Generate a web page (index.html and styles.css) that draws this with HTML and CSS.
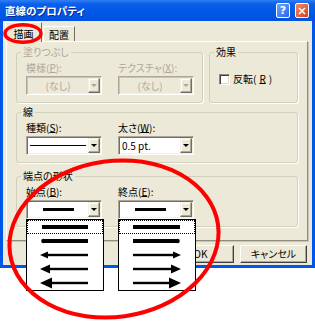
FILE: index.html
```
<!DOCTYPE html>
<html lang="ja">
  <head>
    <meta charset="UTF-8" />
    <title>直線のプロパティ</title>
    <link rel="stylesheet" href="styles.css">
  </head>
  <body>
    <div class="window">
      <div class="titlebar">
        <span class="title">直線のプロパティ</span>
        <div class="caption-btns">
          <span class="cap-btn help">?</span>
          <span class="cap-btn close">
            <svg width="8" height="8" viewBox="0 0 8 8">
              <path d="M1 1L7 7M7 1L1 7" stroke="#fff" stroke-width="1.6" />
            </svg>
          </span>
        </div>
      </div>
      <div class="client">
        <div class="tabs">
          <div class="tab active">描画</div>
          <div class="tab">配置</div>
        </div>
        <div class="panel">
          <div class="row">
            <fieldset class="group fill disabled">
              <legend>塗りつぶし</legend>
              <div class="cols">
                <div class="field">
                  <div class="label">模様(<u>P</u>):</div>
                  <div class="combo">
                    <div class="combo-value center">(なし)</div>
                    <div class="combo-btn"><span class="tri"></span></div>
                  </div>
                </div>
                <div class="field">
                  <div class="label">テクスチャ(<u>X</u>):</div>
                  <div class="combo">
                    <div class="combo-value center">(なし)</div>
                    <div class="combo-btn"><span class="tri"></span></div>
                  </div>
                </div>
              </div>
            </fieldset>
            <fieldset class="group effect">
              <legend>効果</legend>
              <div class="check"><span class="box"></span>反転(<u>R</u>)</div>
            </fieldset>
          </div>

          <fieldset class="group line-group">
            <legend>線</legend>
            <div class="cols">
              <div class="field">
                <div class="label">種類(<u>S</u>):</div>
                <div class="combo">
                  <div class="combo-value"><span class="thin-line"></span></div>
                  <div class="combo-btn"><span class="tri"></span></div>
                </div>
              </div>
              <div class="field">
                <div class="label">太さ(<u>W</u>):</div>
                <div class="combo">
                  <div class="combo-value">0.5 pt.</div>
                  <div class="combo-btn"><span class="tri"></span></div>
                </div>
              </div>
            </div>
          </fieldset>

          <fieldset class="group ends-group">
            <legend>端点の形状</legend>
            <div class="cols">
              <div class="field">
                <div class="label">始点(<u>B</u>):</div>
                <div class="combo">
                  <div class="combo-value center"><span class="thick-line"></span></div>
                  <div class="combo-btn"><span class="tri"></span></div>
                  <div class="dropdown">
                    <div class="item focus">
                      <svg width="76" height="14"><rect x="15" y="5" width="46" height="4" /></svg>
                    </div>
                    <div class="item">
                      <svg width="76" height="14"><rect x="16.5" y="5" width="44.5" height="4" /><circle cx="16.5" cy="7" r="2.3" /></svg>
                    </div>
                    <div class="item">
                      <svg width="76" height="14"><rect x="20" y="5.8" width="41" height="2.4" /><polygon points="13,7 21,3.5 21,10.5" /></svg>
                    </div>
                    <div class="item">
                      <svg width="76" height="14"><rect x="22" y="5.8" width="39" height="2.4" /><polygon points="13,7 23,2.5 23,11.5" /></svg>
                    </div>
                    <div class="item">
                      <svg width="76" height="14"><rect x="24" y="5.8" width="37" height="2.4" /><polygon points="13,7 25,1.5 25,12.5" /></svg>
                    </div>
                  </div>
                </div>
              </div>
              <div class="field">
                <div class="label">終点(<u>E</u>):</div>
                <div class="combo">
                  <div class="combo-value center"><span class="thick-line"></span></div>
                  <div class="combo-btn"><span class="tri"></span></div>
                  <div class="dropdown">
                    <div class="item focus">
                      <svg width="76" height="14"><rect x="14" y="5" width="47" height="4" /></svg>
                    </div>
                    <div class="item">
                      <svg width="76" height="14"><rect x="14" y="5" width="44.5" height="4" /><circle cx="58.5" cy="7" r="2.3" /></svg>
                    </div>
                    <div class="item">
                      <svg width="76" height="14"><rect x="14" y="5.8" width="41" height="2.4" /><polygon points="62,7 54,3.5 54,10.5" /></svg>
                    </div>
                    <div class="item">
                      <svg width="76" height="14"><rect x="14" y="5.8" width="39" height="2.4" /><polygon points="62,7 52,2.5 52,11.5" /></svg>
                    </div>
                    <div class="item">
                      <svg width="76" height="14"><rect x="14" y="5.8" width="37" height="2.4" /><polygon points="62,7 50,1.5 50,12.5" /></svg>
                    </div>
                  </div>
                </div>
              </div>
            </div>
          </fieldset>
        </div>
        <div class="buttons">
          <div class="btn">OK</div>
          <div class="btn">キャンセル</div>
        </div>
      </div>
    </div>

    <svg class="marks" width="315" height="323" viewBox="0 0 315 323">
      <ellipse cx="23" cy="33.5" rx="18" ry="8.8" />
      <ellipse class="big" cx="114" cy="239" rx="105" ry="78" transform="rotate(-8 114 239)" />
    </svg>
  </body>
</html>
```

FILE: styles.css
```
body {
  margin: 0;
  background: #fff;
  font-family: "Noto Sans CJK JP", sans-serif;
  font-size: 10px;
  line-height: 12px;
  color: #000;
  font-feature-settings: "palt";
  position: relative;
  width: 315px;
  height: 323px;
  overflow: hidden;
}
u {
  text-decoration: underline;
  text-underline-offset: 0;
}
.window {
  width: 315px;
}
.titlebar {
  height: 21px;
  box-sizing: border-box;
  padding: 0 6px 0 5px;
  display: flex;
  align-items: center;
  justify-content: space-between;
  background: linear-gradient(#2f7ff2 0, #0a5eea 20%, #0058e6 60%, #0052e0 100%);
}
.title {
  color: #fff;
  font-weight: bold;
  font-size: 10.5px;
  text-shadow: 1px 1px 0 #0a2a90;
}
.caption-btns {
  display: flex;
  gap: 5px;
}
.cap-btn {
  width: 14px;
  height: 15px;
  box-sizing: border-box;
  border: 1px solid #fff;
  border-radius: 2px;
  display: flex;
  align-items: center;
  justify-content: center;
  color: #fff;
  font-family: "DejaVu Sans", sans-serif;
  font-weight: bold;
  font-size: 11px;
}
.help {
  background: linear-gradient(135deg, #6aa6ff, #2a66ea);
}
.close {
  background: linear-gradient(135deg, #f08a68, #d2431b);
}
.client {
  box-sizing: border-box;
  height: 247px;
  padding-top: 1px;
  background: #ece9d8;
  border: 3px solid #0055ea;
  border-top: 0;
}
.tabs {
  display: flex;
  align-items: flex-end;
  height: 19px;
  padding-left: 2px;
}
.tab {
  box-sizing: border-box;
  width: 32px;
  height: 15px;
  margin-left: 1px;
  padding-top: 2px;
  text-align: center;
  background: #ece9d8;
  border: 1px solid;
  border-bottom: 0;
  border-color: #fff #716f64 #716f64 #fff;
}
.tab.active {
  width: 37px;
  height: 20px;
  margin-left: 0;
  margin-bottom: -1px;
  padding-top: 5px;
  position: relative;
  z-index: 1;
}
.panel {
  box-sizing: border-box;
  width: 302px;
  height: 200px;
  margin-left: 3px;
  padding: 4px 9px 0 9px;
  border: 1px solid;
  border-color: #fff #8f8d80 #8f8d80 #fff;
  box-shadow: 1px 1px 0 #c8c5b6;
}
.row {
  display: flex;
  gap: 6px;
}
.group {
  margin: 0;
  min-width: 0;
  padding: 4px 8px 7px 9px;
  border: 1px solid #d0d0bf;
  border-radius: 3px;
  box-shadow: 1px 1px 0 #fff;
}
.group legend {
  padding: 0 2px;
  margin-left: -5px;
  line-height: 12px;
}
.fill {
  width: 187px;
  box-sizing: border-box;
}
.effect {
  flex: 1;
}
.line-group {
  margin-top: 3px;
}
.ends-group {
  margin-top: 7px;
}
.disabled,
.disabled .combo-value {
  color: #aca899;
}
.cols {
  display: flex;
  gap: 16px;
}
.field {
  width: 76px;
}
.label {
  height: 12px;
  margin-bottom: 2px;
  white-space: nowrap;
}
.combo {
  position: relative;
  box-sizing: border-box;
  height: 19px;
  display: flex;
  background: #fff;
  border: 1px solid;
  border-color: #aca899 #fff #fff #aca899;
  box-shadow: inset 1px 1px 0 #716f64, inset -1px -1px 0 #f1efe2;
  padding: 1px;
}
.disabled .combo {
  background: #ece9d8;
  box-shadow: inset 1px 1px 0 #c8c5b6, inset -1px -1px 0 #f1efe2;
}
.combo-value {
  flex: 1;
  display: flex;
  align-items: center;
  padding: 0 2px;
  white-space: nowrap;
}
.combo-value.center {
  justify-content: center;
}
.combo-btn {
  width: 12px;
  box-sizing: border-box;
  background: #ece9d8;
  border: 1px solid;
  border-color: #f1efe2 #716f64 #716f64 #f1efe2;
  box-shadow: inset -1px -1px 0 #aca899, inset 1px 1px 0 #fff;
  display: flex;
  align-items: center;
  justify-content: center;
}
.tri {
  width: 0;
  height: 0;
  border-left: 3px solid transparent;
  border-right: 3px solid transparent;
  border-top: 3px solid #000;
}
.disabled .tri {
  border-top-color: #aca899;
}
.thin-line {
  flex: 1;
  height: 1px;
  background: #000;
}
.thick-line {
  width: 31px;
  height: 3px;
  background: #000;
}
.check {
  display: flex;
  align-items: center;
  gap: 3px;
  margin-top: 11px;
}
.box {
  width: 11px;
  height: 11px;
  box-sizing: border-box;
  background: #fff;
  border: 1px solid;
  border-color: #8f8d80 #fff #fff #8f8d80;
  box-shadow: inset 1px 1px 0 #404040, inset -1px -1px 0 #dcd9c9;
}
.dropdown {
  position: absolute;
  left: -1px;
  top: calc(100% + 1px);
  width: 78px;
  box-sizing: border-box;
  background: #fff;
  border: 1px solid #000;
  z-index: 3;
}
.item {
  height: 14px;
}
.item svg {
  display: block;
  fill: #000;
}
.item.focus {
  outline: 1px dotted #000;
  outline-offset: -1px;
}
.buttons {
  display: flex;
  justify-content: flex-end;
  gap: 6px;
  margin-top: 4px;
  padding-right: 5px;
}
.btn {
  box-sizing: border-box;
  width: 67px;
  height: 18px;
  display: flex;
  align-items: center;
  justify-content: center;
  background: #ece9d8;
  border: 1px solid;
  border-color: #fff #404040 #404040 #fff;
  box-shadow: inset -1px -1px 0 #aca899;
}
.marks {
  position: absolute;
  left: 0;
  top: 0;
  pointer-events: none;
  z-index: 5;
}
.marks ellipse {
  fill: none;
  stroke: #f00;
  stroke-width: 3.5;
}
.marks .big {
  stroke-width: 4;
}
```
